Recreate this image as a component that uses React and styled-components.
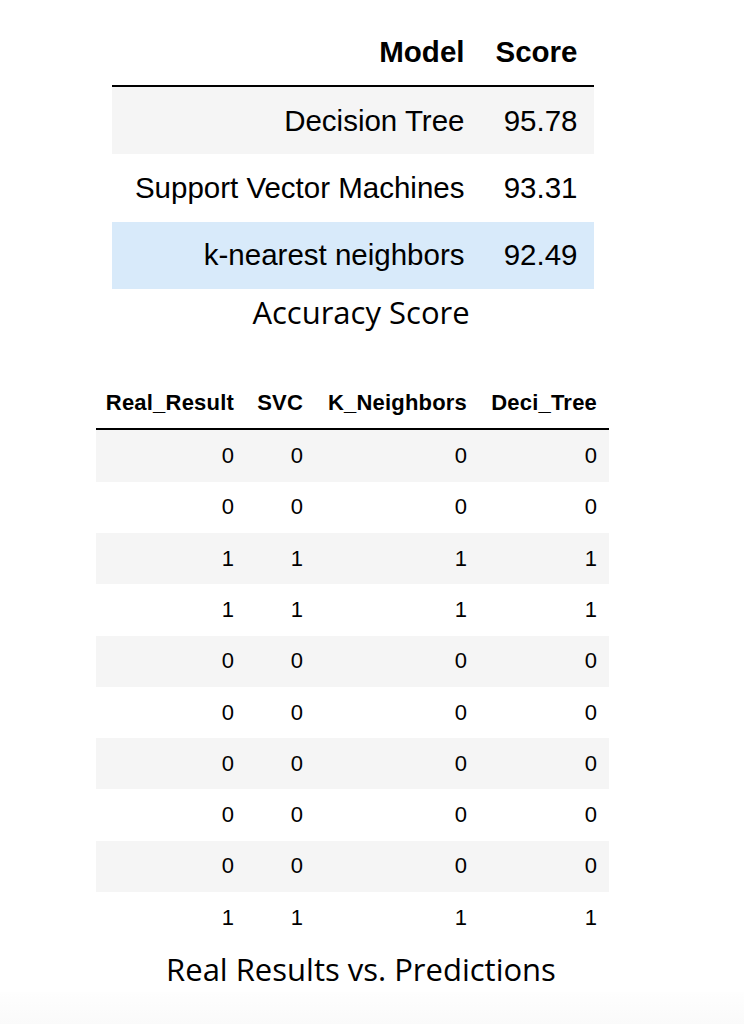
import React from "react";
import styled, { createGlobalStyle } from "styled-components";

const GlobalStyle = createGlobalStyle`
  html, body {
    margin: 0;
    padding: 0;
    background: #fff;
  }
  body {
    font-family: "Liberation Sans", Arial, sans-serif;
    color: #000;
  }
`;

const scores = [
  { model: "Decision Tree", score: "95.78", bg: "#f5f5f5" },
  { model: "Support Vector Machines", score: "93.31", bg: "#fff" },
  { model: "k-nearest neighbors", score: "92.49", bg: "#d8eafa" },
];

const predictions = [
  [0, 0, 0, 0],
  [0, 0, 0, 0],
  [1, 1, 1, 1],
  [1, 1, 1, 1],
  [0, 0, 0, 0],
  [0, 0, 0, 0],
  [0, 0, 0, 0],
  [0, 0, 0, 0],
  [0, 0, 0, 0],
  [1, 1, 1, 1],
];

function App() {
  return (
    <>
      <GlobalStyle />
      <Page>
        <Table $width={482}>
          <Row $cols="368px 114px" $h={67} $fs={29.5} $head>
            <Cell $pad={15} $bold>Model</Cell>
            <Cell $pad={16} $bold>Score</Cell>
          </Row>
          {scores.map((s) => (
            <Row key={s.model} $cols="368px 114px" $h={67.3} $fs={29.5} $bg={s.bg}>
              <Cell $pad={15}>{s.model}</Cell>
              <Cell $pad={16}>{s.score}</Cell>
            </Row>
          ))}
        </Table>
        <Caption $top={5}>Accuracy Score</Caption>

        <Table $width={513} $gap={47}>
          <Row $cols="150px 69px 164px 130px" $h={50.5} $fs={22} $ls={0.2} $head>
            <Cell $pad={12} $bold>Real_Result</Cell>
            <Cell $pad={12} $bold>SVC</Cell>
            <Cell $pad={12} $bold>K_Neighbors</Cell>
            <Cell $pad={12} $bold>Deci_Tree</Cell>
          </Row>
          {predictions.map((r, i) => (
            <Row
              key={i}
              $cols="150px 69px 164px 130px"
              $h={51.3}
              $fs={22}
              $bg={i % 2 === 0 ? "#f5f5f5" : "#fff"}
            >
              {r.map((v, j) => (
                <Cell key={j} $pad={12}>
                  {v}
                </Cell>
              ))}
            </Row>
          ))}
        </Table>
        <Caption $top={8}>Real Results vs. Predictions</Caption>
        <Footer />
      </Page>
    </>
  );
}

const Page = styled.div`
  width: 705px;
  height: 1024px;
  padding-top: 18px;
  box-sizing: border-box;
  display: flex;
  flex-direction: column;
  align-items: center;
  position: relative;
`;

const Table = styled.div`
  width: ${(p) => p.$width}px;
  margin-top: ${(p) => p.$gap || 0}px;
  display: flex;
  flex-direction: column;
`;

const Row = styled.div`
  display: grid;
  grid-template-columns: ${(p) => p.$cols};
  height: ${(p) => p.$h}px;
  font-size: ${(p) => p.$fs}px;
  letter-spacing: ${(p) => p.$ls || 0}px;
  background: ${(p) => p.$bg || "#fff"};
  border-bottom: ${(p) => (p.$head ? "2px solid #000" : "none")};
`;

const Cell = styled.div`
  display: flex;
  align-items: center;
  justify-content: flex-end;
  padding: 0 ${(p) => p.$pad}px;
  font-weight: ${(p) => (p.$bold ? 700 : 400)};
  white-space: nowrap;
`;

const Caption = styled.div`
  margin-top: ${(p) => p.$top}px;
  padding-left: 17px;
  font-family: "Open Sans", Lato, sans-serif;
  font-size: 31px;
  line-height: 37px;
  text-align: center;
`;

const Footer = styled.div`
  position: absolute;
  left: 0;
  bottom: 0;
  width: 744px;
  height: 32px;
  background: linear-gradient(#fefefe, #fafafa);
`;

export default App;
